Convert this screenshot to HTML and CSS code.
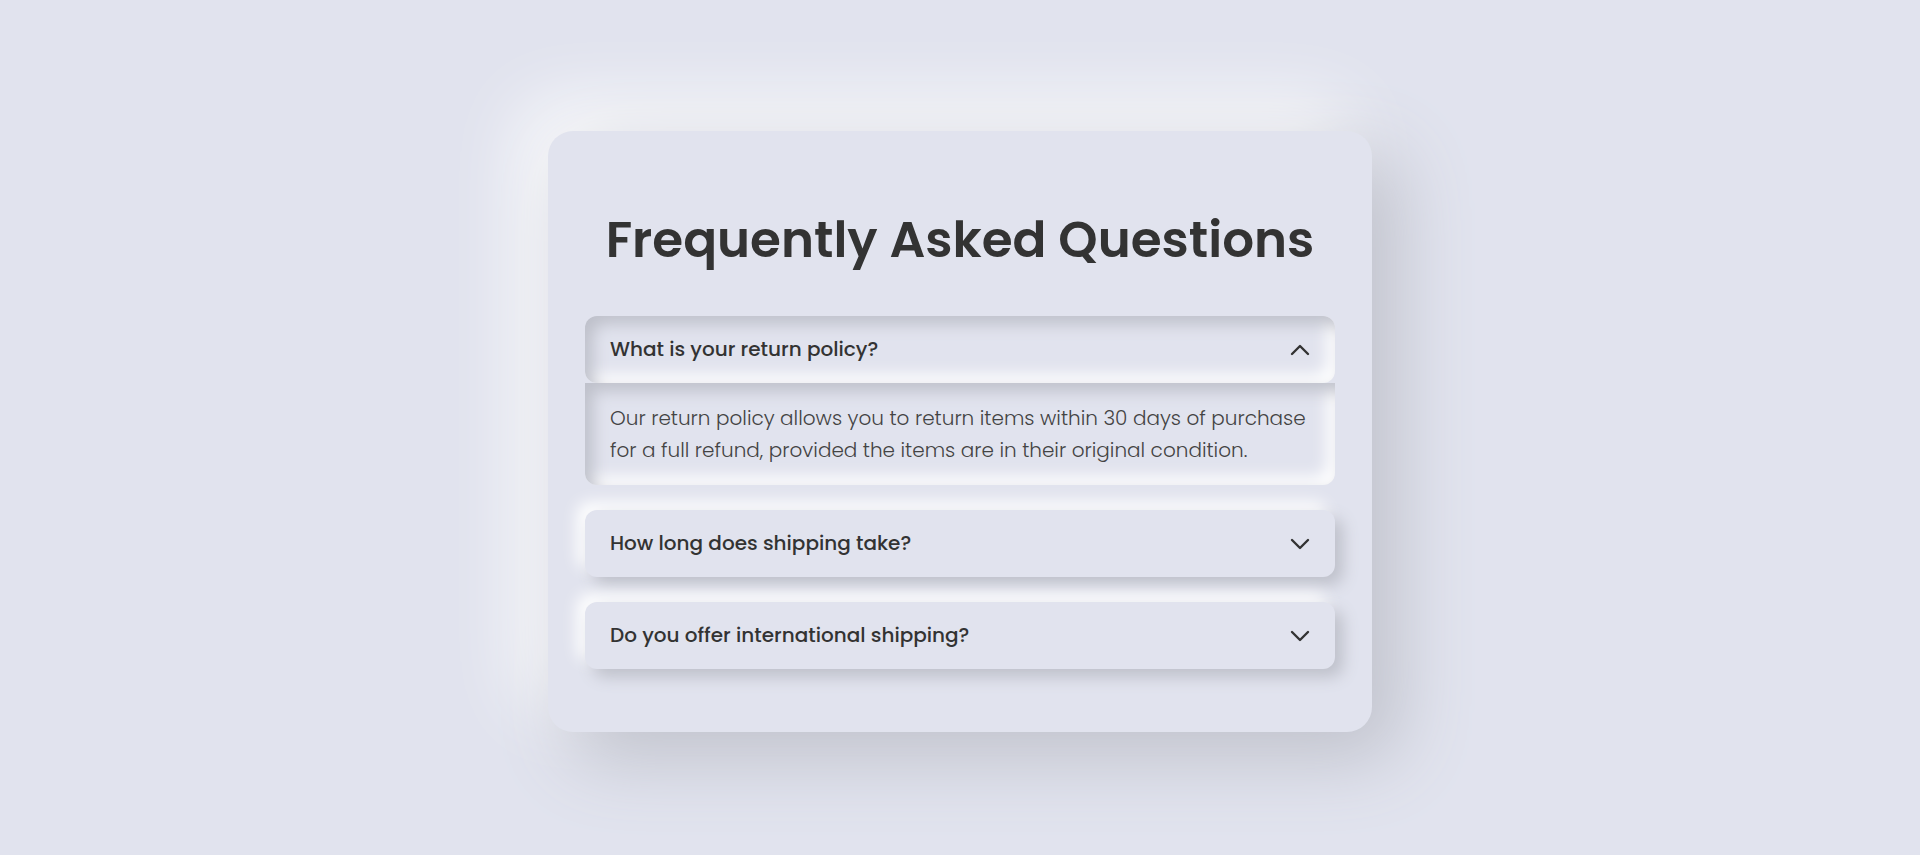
FILE: index.html
```html
<!DOCTYPE html>
<html lang="en">
<head>
  <meta charset="utf-8">
  <meta name="viewport" content="width=device-width, initial-scale=1">
  <title>Frequently Asked Questions</title>
  <link rel="stylesheet" href="styles.css">
</head>
<body>
  <main class="faq">
    <h1 class="faq-title">Frequently Asked Questions</h1>
    <section class="faq-item open">
      <button class="question" type="button" id="q1" aria-expanded="true" aria-controls="a1">
        <span>What is your return policy?</span>
        <svg class="chevron" viewBox="0 0 20 20" aria-hidden="true"><path d="M2 6l8 8 8-8"/></svg>
      </button>
      <p class="answer" id="a1">Our return policy allows you to return items within 30 days of purchase for a full refund, provided the items are in their original condition.</p>
    </section>
    <section class="faq-item">
      <button class="question" type="button" id="q2" aria-expanded="false">
        <span>How long does shipping take?</span>
        <svg class="chevron" viewBox="0 0 20 20" aria-hidden="true"><path d="M2 6l8 8 8-8"/></svg>
      </button>
    </section>
    <section class="faq-item">
      <button class="question" type="button" id="q3" aria-expanded="false">
        <span>Do you offer international shipping?</span>
        <svg class="chevron" viewBox="0 0 20 20" aria-hidden="true"><path d="M2 6l8 8 8-8"/></svg>
      </button>
    </section>
  </main>
</body>
</html>
```
FILE: styles.css
```css
* {
  box-sizing: border-box;
}

body {
  display: flex;
  align-items: center;
  justify-content: center;
  min-height: 100vh;
  margin: 0;
  padding-top: 8px;
  background: #e1e3ee;
  color: #333;
  font-family: Poppins, Inter, "Open Sans", sans-serif;
}

.faq {
  width: 100%;
  max-width: 824px;
  padding: 71px 37px 38px;
  border-radius: 25px;
  background: #e1e3ee;
  box-shadow: 25px 25px 75px #bec0ca, -25px -25px 75px #fff;
}

.faq-title {
  margin: 0 0 39px;
  font-size: 50px;
  font-weight: 600;
  line-height: 75px;
  text-align: center;
}

.faq-item {
  margin-bottom: 25px;
}

.question {
  display: flex;
  align-items: center;
  justify-content: space-between;
  width: 100%;
  padding: 18px 25px;
  border: 0;
  border-radius: 12px;
  background: #e1e3ee;
  box-shadow: 8px 8px 16px #bec0ca, -8px -8px 16px #fff;
  color: #333;
  font: inherit;
  font-size: 20px;
  font-weight: 500;
  line-height: 31px;
  text-align: left;
  cursor: pointer;
}

.open .question {
  box-shadow: inset 8px 8px 16px #bec0ca, inset -8px -8px 16px #fff;
}

.chevron {
  width: 20px;
  height: 20px;
  fill: none;
  stroke: #333;
  stroke-width: 2.4;
  stroke-linecap: round;
  stroke-linejoin: round;
}

.open .chevron {
  transform: rotate(180deg);
}

.answer {
  margin: 0;
  padding: 19px 25px;
  border-radius: 0 0 12px 12px;
  box-shadow: inset 8px 8px 16px #bec0ca, inset -8px -8px 16px #fff;
  color: #444;
  font-size: 20px;
  font-weight: 300;
  line-height: 32px;
}
```
